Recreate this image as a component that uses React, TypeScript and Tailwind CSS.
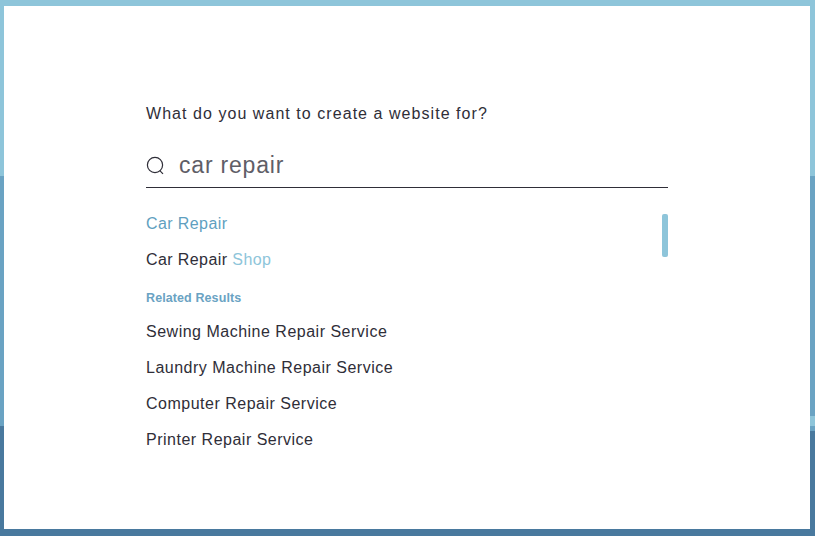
import React from 'react';

const related = [
  'Sewing Machine Repair Service',
  'Laundry Machine Repair Service',
  'Computer Repair Service',
  'Printer Repair Service',
];

export default function App() {
  return (
    <div className="relative w-[815px] h-[536px] overflow-hidden font-['Liberation_Sans',Arial,sans-serif]">
      {/* background bands */}
      <div className="flex flex-col h-full">
        <div className="h-[176px] bg-[#8ec5da]" />
        <div className="h-[250px] bg-[#6aa3c3]" />
        <div className="flex-1 bg-[#49799e]" />
      </div>
      <div className="absolute right-0 top-[416px] w-[5px] h-[10px] bg-[#8ec5da]" />
      <div className="absolute right-0 top-[426px] w-[5px] h-[5px] bg-[#6aa3c3]" />

      {/* white panel */}
      <div className="absolute left-[4px] top-[6px] w-[806px] h-[523px] bg-white pl-[142px] pt-[98px]">
        <div className="w-[522px]">
          <p className="text-[16px] leading-[20px] tracking-[1.05px] text-[#2f2e38]">What do you want to create a website for?</p>

          <div className="flex items-center h-[51px] mt-[13px] border-b border-[#2f2e38] pt-[6px]">
            <svg width="19" height="19" viewBox="0 0 19 19" fill="none" stroke="#2f2e38" strokeWidth="1.2" className="shrink-0">
              <circle cx="9" cy="9" r="7.6" />
              <path d="M13.8 14.6 L17 17.8" />
            </svg>
            <span className="ml-[14px] text-[23px] leading-[30px] tracking-[0.8px] text-[#5f5e67]">car repair</span>
          </div>

          <div className="relative mt-[18px]">
            <div className="h-[36px] flex items-center text-[16px] tracking-[0.4px] text-[#5f9fbf]">Car Repair</div>
            <div className="h-[36px] flex items-center text-[16px] tracking-[0.4px] text-[#2f2e38]">
              Car Repair<span className="ml-[5px] text-[#8ec5da]">Shop</span>
            </div>
            <div className="h-[36px] flex items-center pt-[4px] text-[12.5px] tracking-[0.1px] font-bold text-[#6aa3c3]">Related Results</div>
            {related.map(name => (
              <div key={name} className="h-[36px] flex items-center text-[16px] tracking-[0.5px] text-[#2f2e38]">{name}</div>
            ))}
            <div className="absolute right-0 top-[8px] w-[6px] h-[43px] rounded-[2px] bg-[#8ec5da]" />
          </div>
        </div>
      </div>
    </div>
  );
}
